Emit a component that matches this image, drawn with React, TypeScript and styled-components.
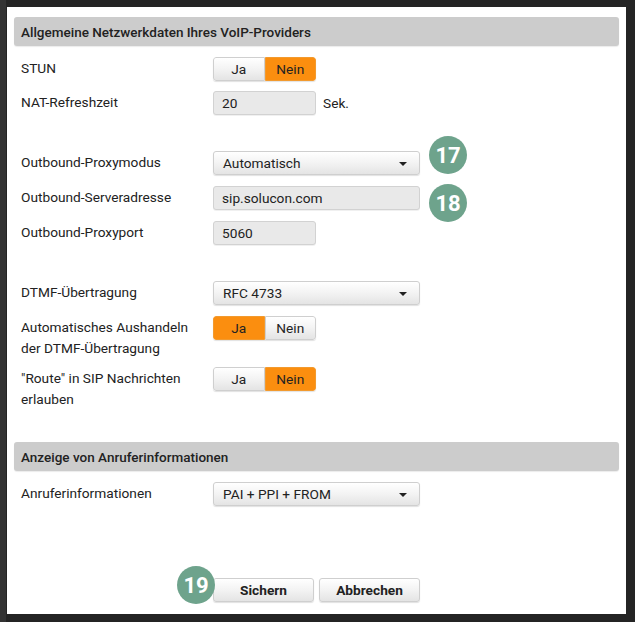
import React from "react";
import styled, { createGlobalStyle, css } from "styled-components";

const Global = createGlobalStyle`
  html, body { margin: 0; padding: 0; background: #242424; }
  body { font-family: Roboto, "Liberation Sans", Arial, sans-serif; font-size: 14px; color: #222; }
  * { box-sizing: border-box; }
`;

const Frame = styled.div`
  width: 635px;
  height: 622px;
  padding: 7px 9px 8px 7px;
  background: linear-gradient(to right, #333 0, #333 6px, #242424 6px);
`;

const Panel = styled.div`
  width: 100%;
  height: 100%;
  background: #fff;
  padding: 10px 7px 0 7px;
  display: flex;
  flex-direction: column;
`;

const SectionHeader = styled.div<{ $mt?: number }>`
  height: 29px;
  margin-top: ${(p) => p.$mt ?? 0}px;
  background: #cccccc;
  border-radius: 3px;
  padding-left: 7px;
  display: flex;
  align-items: center;
  font-weight: 500;
  font-size: 13.5px;
  color: #222;
  box-shadow: 0 1px 1px rgba(0, 0, 0, 0.08);
`;

const Row = styled.div<{ $mt?: number }>`
  display: flex;
  align-items: flex-start;
  padding-left: 7px;
  margin-top: ${(p) => p.$mt ?? 11}px;
`;

const Label = styled.div`
  width: 192px;
  flex: none;
  line-height: 21px;
  min-height: 24px;
  padding-top: 1px;
  font-size: 13.7px;
  color: #222;
`;

const Control = styled.div`
  position: relative;
  display: flex;
  align-items: center;
  gap: 7px;
  height: 24px;
`;

const raised = css`
  background: linear-gradient(to bottom, #ffffff 0%, #f3f3f3 50%, #e4e4e4 100%);
  border: 1px solid #cfcfcf;
  box-shadow: 0 1px 1px rgba(0, 0, 0, 0.12);
`;

const Toggle = styled.div`
  display: flex;
  width: 103px;
  height: 24px;
  border-radius: 3px;
  overflow: hidden;
  box-shadow: 0 1px 1px rgba(0, 0, 0, 0.12);
`;

const ToggleHalf = styled.div<{ $active?: boolean }>`
  flex: 1;
  display: flex;
  align-items: center;
  justify-content: center;
  font-size: 13.7px;
  color: #222;
  border: 1px solid ${(p) => (p.$active ? "#f29a2e" : "#cfcfcf")};
  background: ${(p) =>
    p.$active
      ? "#fb8e0f"
      : "linear-gradient(to bottom, #ffffff 0%, #f3f3f3 50%, #e4e4e4 100%)"};
  &:first-child { border-radius: 3px 0 0 3px; }
  &:last-child { border-radius: 0 3px 3px 0; }
`;

const Input = styled.div<{ $w: number }>`
  width: ${(p) => p.$w}px;
  height: 24px;
  background: #e9e9e9;
  border: 1px solid #d2d2d2;
  border-radius: 3px;
  padding-left: 8px;
  display: flex;
  align-items: center;
  font-size: 13.7px;
  color: #222;
  box-shadow: 0 1px 0 rgba(0, 0, 0, 0.06);
`;

const Unit = styled.span`
  font-size: 13.7px;
  color: #222;
`;

const Select = styled.div`
  ${raised};
  width: 207px;
  height: 24px;
  border-radius: 3px;
  padding: 0 12px 0 9px;
  display: flex;
  align-items: center;
  justify-content: space-between;
  font-size: 13.7px;
  color: #222;
`;

const Caret = styled.span`
  width: 0;
  height: 0;
  border-left: 4px solid transparent;
  border-right: 4px solid transparent;
  border-top: 4px solid #222;
  margin-top: 1px;
`;

const Badge = styled.div<{ $left: number; $top: number }>`
  position: absolute;
  left: ${(p) => p.$left}px;
  top: ${(p) => p.$top}px;
  width: 38px;
  height: 38px;
  border-radius: 50%;
  background: #6ea38c;
  color: #fff;
  font-weight: 700;
  font-size: 22px;
  display: flex;
  align-items: center;
  justify-content: center;
  z-index: 2;
`;

const Actions = styled.div`
  position: relative;
  display: flex;
  gap: 5px;
  margin-top: 72px;
  margin-left: 199px;
`;

const Button = styled.div`
  ${raised};
  width: 101px;
  height: 24px;
  border-radius: 3px;
  display: flex;
  align-items: center;
  justify-content: center;
  font-weight: 700;
  font-size: 13.7px;
  color: #222;
`;

const YesNo: React.FC<{ yes: boolean }> = ({ yes }) => (
  <Toggle>
    <ToggleHalf $active={yes}>Ja</ToggleHalf>
    <ToggleHalf $active={!yes}>Nein</ToggleHalf>
  </Toggle>
);

export default function App() {
  return (
    <>
      <Global />
      <Frame>
        <Panel>
          <SectionHeader>Allgemeine Netzwerkdaten Ihres VoIP-Providers</SectionHeader>
          <Row>
            <Label>STUN</Label>
            <Control>
              <YesNo yes={false} />
            </Control>
          </Row>
          <Row $mt={10}>
            <Label>NAT-Refreshzeit</Label>
            <Control>
              <Input $w={103}>20</Input>
              <Unit>Sek.</Unit>
            </Control>
          </Row>
          <Row $mt={36}>
            <Label>Outbound-Proxymodus</Label>
            <Control>
              <Select>
                Automatisch
                <Caret />
              </Select>
              <Badge $left={216} $top={-15}>17</Badge>
            </Control>
          </Row>
          <Row>
            <Label>Outbound-Serveradresse</Label>
            <Control>
              <Input $w={207}>sip.solucon.com</Input>
              <Badge $left={216} $top={-2}>18</Badge>
            </Control>
          </Row>
          <Row>
            <Label>Outbound-Proxyport</Label>
            <Control>
              <Input $w={103}>5060</Input>
            </Control>
          </Row>
          <Row $mt={36}>
            <Label>DTMF-Übertragung</Label>
            <Control>
              <Select>
                RFC 4733
                <Caret />
              </Select>
            </Control>
          </Row>
          <Row>
            <Label>
              Automatisches Aushandeln
              <br />
              der DTMF-Übertragung
            </Label>
            <Control>
              <YesNo yes={true} />
            </Control>
          </Row>
          <Row $mt={8}>
            <Label>
              "Route" in SIP Nachrichten
              <br />
              erlauben
            </Label>
            <Control>
              <YesNo yes={false} />
            </Control>
          </Row>
          <SectionHeader $mt={32}>Anzeige von Anruferinformationen</SectionHeader>
          <Row>
            <Label>Anruferinformationen</Label>
            <Control>
              <Select>
                PAI + PPI + FROM
                <Caret />
              </Select>
            </Control>
          </Row>
          <Actions>
            <Badge $left={-36} $top={-12}>19</Badge>
            <Button>Sichern</Button>
            <Button>Abbrechen</Button>
          </Actions>
        </Panel>
      </Frame>
    </>
  );
}
